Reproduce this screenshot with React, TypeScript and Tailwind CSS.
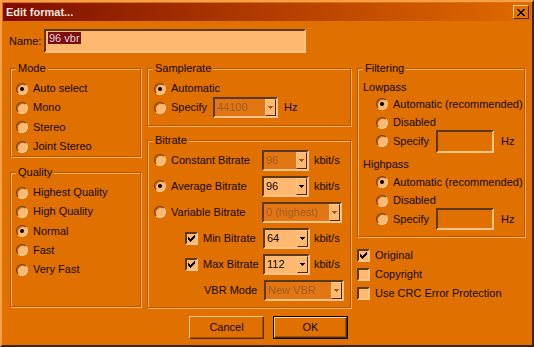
import type { ReactNode } from 'react'
import clsx from 'clsx'

const SUNKEN = 'border-t-[#5c3818] border-l-[#5c3818] border-r-[#ffc48a] border-b-[#ffc48a]'
const RAISED = 'border-t-[#ffc890] border-l-[#ffc890] border-r-[#4a2a10] border-b-[#4a2a10]'

function Group({ title, className, children }: { title: string; className: string; children?: ReactNode }) {
  return (
    <div
      className={clsx(
        'flex flex-col border border-[#b45a00] shadow-[inset_1px_1px_0_#ffae5e,1px_1px_0_#ffae5e]',
        className,
      )}
    >
      <span className="-mt-[7px] ml-[5px] h-[13px] w-fit bg-[#e07000] px-[2px]">{title}</span>
      {children}
    </div>
  )
}

function Radio({ checked }: { checked?: boolean }) {
  return (
    <span className="flex h-[12px] w-[12px] shrink-0 items-center justify-center rounded-full border border-t-[#6b3a12] border-l-[#6b3a12] border-r-[#ffd29e] border-b-[#ffd29e] bg-[#ffb870] shadow-[inset_1px_1px_0_#b86a20]">
      {checked && <span className="h-[4px] w-[4px] rounded-full bg-black" />}
    </span>
  )
}

function Check({ checked }: { checked?: boolean }) {
  return (
    <span className={clsx('flex h-[13px] w-[13px] shrink-0 items-center justify-center border-2 bg-[#ffb870]', SUNKEN)}>
      {checked && (
        <svg width="7" height="7" viewBox="0 0 7 7" shapeRendering="crispEdges">
          <path d="M0 2h1v1h1v1h1v-1h1v-1h1v-1h1v-1h1v3h-1v1h-1v1h-1v1h-1v1h-1v-1h-1v-1h-1z" fill="#000" />
        </svg>
      )}
    </span>
  )
}

function Arrow({ disabled }: { disabled?: boolean }) {
  return (
    <svg width="5" height="3" viewBox="0 0 5 3" shapeRendering="crispEdges">
      <path d="M0 0h5v1h-1v1h-1v1h-1v-1h-1v-1h-1z" fill={disabled ? '#a05a24' : '#000'} />
    </svg>
  )
}

function Combo({ value, className, disabled }: { value: string; className: string; disabled?: boolean }) {
  return (
    <div
      className={clsx(
        'flex h-[21px] shrink-0 border-2',
        SUNKEN,
        disabled ? 'bg-[#e27612] text-[#a45c24]' : 'bg-[#ffb870]',
        className,
      )}
    >
      <span className="flex flex-1 items-center whitespace-nowrap pl-[2px]">{value}</span>
      <span className={clsx('flex w-[11px] items-center justify-center border bg-[#ffb870]', RAISED)}>
        <Arrow disabled={disabled} />
      </span>
    </div>
  )
}

function RadioRow({
  label,
  checked,
  className,
  labelClass,
  children,
}: {
  label: string
  checked?: boolean
  className: string
  labelClass?: string
  children?: ReactNode
}) {
  return (
    <div className={clsx('flex items-center', className)}>
      <Radio checked={checked} />
      <span className={clsx('ml-[5px] shrink-0 whitespace-nowrap', labelClass)}>{label}</span>
      {children}
    </div>
  )
}

function CheckRow({
  label,
  checked,
  className,
  labelClass,
  children,
}: {
  label: string
  checked?: boolean
  className: string
  labelClass?: string
  children?: ReactNode
}) {
  return (
    <div className={clsx('flex items-center', className)}>
      <Check checked={checked} />
      <span className={clsx('ml-[5px] shrink-0 whitespace-nowrap', labelClass)}>{label}</span>
      {children}
    </div>
  )
}

function Button({ label, primary }: { label: string; primary?: boolean }) {
  return (
    <div className={clsx('h-[23px] w-[75px]', primary ? 'border border-black' : '')}>
      <div
        className={clsx(
          'flex h-full w-full items-center justify-center border bg-[#e07000] shadow-[inset_-1px_-1px_0_#a85200]',
          RAISED,
        )}
      >
        {label}
      </div>
    </div>
  )
}

function EditBox() {
  return <div className={clsx('w-[58px] shrink-0 border-2 bg-[#e07000]', SUNKEN)} />
}

export default function App() {
  return (
    <div
      className={clsx(
        "flex h-[347px] w-[534px] flex-col border-2 bg-[#e07000] p-px font-['Liberation_Sans',Arial,sans-serif] text-[11px] leading-[13px] text-[#140a00]",
        'border-t-[#f5a048] border-l-[#f5a048] border-r-[#3c2410] border-b-[#3c2410]',
      )}
    >
      {/* title bar */}
      <div className="flex h-[18px] shrink-0 items-center justify-between bg-linear-to-r from-[#7d0a00] via-[#b23c00] to-[#e06a00] pl-[3px] pr-[2px]">
        <span className="font-bold text-[#f4e6dc]">Edit format...</span>
        <span className={clsx('flex h-[14px] w-[16px] items-center justify-center border bg-[#e07000]', RAISED)}>
          <svg width="8" height="7" viewBox="0 0 8 7" shapeRendering="crispEdges">
            <path d="M0 0h2v1h1v1h2v-1h1v-1h2v1h-1v1h-1v1h-1v1h1v1h1v1h1v1h-2v-1h-1v-1h-2v1h-1v1h-2v-1h1v-1h1v-1h1v-1h-1v-1h-1v-1h-1z" fill="#000" />
          </svg>
        </span>
      </div>

      <div className="flex flex-1 flex-col pt-[8px]">
        {/* name */}
        <div className="flex h-[24px] items-center pl-[6px]">
          <span className="w-[35px]">Name:</span>
          <div className={clsx('h-[24px] w-[262px] border-2 bg-[#ffb870] pl-[2px] pt-px', SUNKEN)}>
            <span className="bg-[#7b0d0d] px-px text-[#e6d2dc]">96 vbr</span>
          </div>
        </div>

        <div className="mt-[15px] flex gap-[6px] pl-[7px]">
          {/* left column */}
          <div className="flex w-[131px] flex-col">
            <Group title="Mode" className="h-[89px]">
              <div className="flex flex-col pl-[5px] pt-[4px]">
                <RadioRow label="Auto select" checked className="h-[19.33px]" />
                <RadioRow label="Mono" className="h-[19.33px]" />
                <RadioRow label="Stereo" className="h-[19.33px]" />
                <RadioRow label="Joint Stereo" className="h-[19.33px]" />
              </div>
            </Group>
            <Group title="Quality" className="mt-[15px] h-[135px]">
              <div className="flex flex-col pl-[5px] pt-[4px]">
                <RadioRow label="Highest Quality" className="h-[19.25px]" />
                <RadioRow label="High Quality" className="h-[19.25px]" />
                <RadioRow label="Normal" checked className="h-[19.25px]" />
                <RadioRow label="Fast" className="h-[19.25px]" />
                <RadioRow label="Very Fast" className="h-[19.25px]" />
              </div>
            </Group>
          </div>

          {/* middle column */}
          <div className="flex w-[204px] flex-col">
            <Group title="Samplerate" className="h-[58px]">
              <div className="flex flex-col pl-[6px] pt-[4px]">
                <RadioRow label="Automatic" checked className="h-[19px]" />
                <RadioRow label="Specify" className="h-[19px]" labelClass="w-[42px]">
                  <Combo value="44100" disabled className="w-[65px]" />
                  <span className="ml-[6px]">Hz</span>
                </RadioRow>
              </div>
            </Group>
            <Group title="Bitrate" className="mt-[14px] h-[168px]">
              <div className="flex flex-col">
                <RadioRow label="Constant Bitrate" className="h-[26px] pl-[6px]" labelClass="w-[91px]">
                  <Combo value="96" disabled className="w-[47px]" />
                  <span className="ml-[5px]">kbit/s</span>
                </RadioRow>
                <RadioRow label="Average Bitrate" checked className="h-[26px] pl-[6px]" labelClass="w-[91px]">
                  <Combo value="96" className="w-[47px]" />
                  <span className="ml-[5px]">kbit/s</span>
                </RadioRow>
                <RadioRow label="Variable Bitrate" className="h-[26px] pl-[6px]" labelClass="w-[91px]">
                  <Combo value="0 (highest)" disabled className="w-[80px]" />
                </RadioRow>
                <CheckRow label="Min Bitrate" checked className="h-[26px] pl-[37px]" labelClass="w-[60px]">
                  <Combo value="64" className="w-[47px]" />
                  <span className="ml-[4px]">kbit/s</span>
                </CheckRow>
                <CheckRow label="Max Bitrate" checked className="h-[26px] pl-[37px]" labelClass="w-[60px]">
                  <Combo value="112" className="w-[47px]" />
                  <span className="ml-[4px]">kbit/s</span>
                </CheckRow>
                <div className="flex h-[26px] items-center pl-[56px]">
                  <span className="w-[60px]">VBR Mode</span>
                  <Combo value="New VBR" disabled className="w-[80px]" />
                </div>
              </div>
            </Group>
            <div className="mt-[8px] flex gap-[9px] pl-[42px]">
              <Button label="Cancel" />
              <Button label="OK" primary />
            </div>
          </div>

          {/* right column */}
          <div className="flex w-[168px] flex-col">
            <Group title="Filtering" className="h-[169px]">
              <div className="flex flex-col pt-[4px]">
                <div className="flex h-[16px] items-center pl-[5px]">Lowpass</div>
                <RadioRow label="Automatic (recommended)" checked className="h-[18px] pl-[18px]" />
                <RadioRow label="Disabled" className="h-[19px] pl-[18px]" />
                <RadioRow label="Specify" className="h-[18px] pl-[18px]" labelClass="w-[43px]">
                  <div className="flex h-[23px] shrink-0">
                    <EditBox />
                  </div>
                  <span className="ml-[7px]">Hz</span>
                </RadioRow>
                <div className="mt-[5px] flex h-[18px] items-center pl-[5px]">Highpass</div>
                <RadioRow label="Automatic (recommended)" checked className="h-[18px] pl-[18px]" />
                <RadioRow label="Disabled" className="h-[19px] pl-[18px]" />
                <RadioRow label="Specify" className="h-[18px] pl-[18px]" labelClass="w-[43px]">
                  <div className="flex h-[22px] shrink-0">
                    <EditBox />
                  </div>
                  <span className="ml-[7px]">Hz</span>
                </RadioRow>
              </div>
            </Group>
            <div className="mt-[9px] flex flex-col">
              <CheckRow label="Original" checked className="h-[19px]" />
              <CheckRow label="Copyright" className="h-[19px]" />
              <CheckRow label="Use CRC Error Protection" className="h-[19px]" />
            </div>
          </div>
        </div>
      </div>
    </div>
  )
}
